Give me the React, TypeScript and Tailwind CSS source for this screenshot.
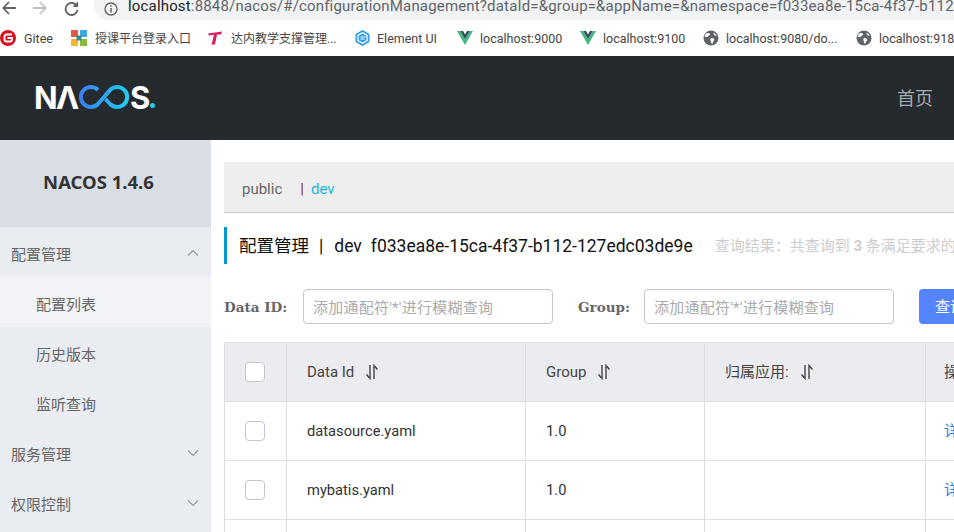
import React from "react";

const SANS = "font-['Roboto','Noto_Sans_CJK_SC',sans-serif]";

function Chevron({ up }: { up?: boolean }) {
  return (
    <svg width="12" height="8" viewBox="0 0 12 8" fill="none" stroke="#8f96a3" strokeWidth="1.1" className="mt-[2px]">
      <path d={up ? "M1 6.5 6 1.5l5 5" : "M1 1.5l5 5 5-5"} />
    </svg>
  );
}

function SortIcon() {
  return (
    <svg width="14" height="16" viewBox="0 0 14 16" fill="none" stroke="#444" strokeWidth="1.4" className="ml-[11px]">
      <path d="M5 1v13.5L1.500 10.500" />
      <path d="M9 15V1.500l3.500 4" />
    </svg>
  );
}

function Vue() {
  return (
    <svg width="16" height="14" viewBox="0 0 16 14">
      <path d="M0 0h3.400L8 8l4.600-8H16L8 14z" fill="#41b883" />
      <path d="M3.400 0h2.600L8 3.400 10 0h2.600L8 8z" fill="#35495e" />
    </svg>
  );
}

function Globe() {
  return (
    <svg width="16" height="16" viewBox="0 0 16 16">
      <circle cx="8" cy="8" r="7.500" fill="#5f6368" />
      <path d="M3 3.500c1.500-.8 3-.8 4 .2.600.8-.3 1.400-1.100 1.700-.9.400-.6 1.400-1.500 1.600C3.300 7.200 2 6.500 1.500 7 1.700 5.500 2.200 4.400 3 3.500zM8 8.200c1.300-.4 3 .2 3.300 1.300.2 1-.9 1.600-1.300 2.500-.3.800-.4 1.600-1 2-.9-.8-.8-2-1.300-3C7.300 10 7 8.700 8 8.200zM10.500 2.700c1.500.6 2.600 1.800 3.200 3.300-.8.200-1.700-.2-2.300-.9-.4-.7-1.300-1.400-.9-2.400z" fill="#fff" />
    </svg>
  );
}

function Bookmark({ w, icon, label, tight, cjk }: { w: string; icon: React.ReactNode; label: string; tight?: boolean; cjk?: boolean }) {
  return (
    <div className={`flex items-center shrink-0 ${tight ? "gap-[7px]" : "gap-[8px]"} ${w}`}>
      <span className="flex w-[16px] justify-center shrink-0 mt-[-1px]">{icon}</span>
      <span className={`whitespace-nowrap pt-[2px] ${cjk ? "text-[12px]" : "text-[12.500px]"}`}>{label}</span>
    </div>
  );
}

function Logo() {
  return (
    <div className="flex items-center h-[24px] -ml-[2px] -mt-[2px] text-white font-['Inter',sans-serif] font-bold text-[31px] leading-none" aria-label="NACOS.">
      <span className="w-[22px]">N</span>
      <span className="w-[24px]">Λ</span>
      <svg width="50" height="24" viewBox="0 0 50 24" fill="none" strokeWidth="4" className="-ml-[1px]">
        <defs>
          <linearGradient id="lg" gradientUnits="userSpaceOnUse" x1="0" x2="50" y1="0" y2="0">
            <stop offset="0" stopColor="#3c7df0" />
            <stop offset="1" stopColor="#1fd0ee" />
          </linearGradient>
        </defs>
        <path d="M19 5A10 10 0 1 0 19 19L31 5A10 10 0 1 1 31 19L26.500 14" stroke="url(#lg)" />
      </svg>
      <span className="w-[20px] ml-[1px]">S</span>
      <span className="w-[5px] h-[5px] rounded-full bg-[#22cfe8] self-end mb-[1px]" />
    </div>
  );
}

function MenuItem({ label, sub, active, up, down }: { label: string; sub?: boolean; active?: boolean; up?: boolean; down?: boolean }) {
  return (
    <div className={`flex items-center justify-between h-[50px] pr-[12px] text-[15px] text-[#666] ${sub ? "pl-[36px]" : "pl-[11px]"} ${active ? "bg-[#f1f3f7]" : ""}`}>
      <span className="pt-[7px]">{label}</span>
      {up && <Chevron up />}
      {down && <Chevron />}
    </div>
  );
}

function Check() {
  return <span className="block w-[20px] h-[20px] rounded-[4px] border border-[#c4c6cf] bg-white ml-[20px]" />;
}

const cell = "border border-[#dcdee3]";

function Row({ name }: { name: string }) {
  return (
    <tr className="h-[59px]">
      <td className="border border-[#dcdee3]"><Check /></td>
      <td className={`${cell} px-[20px] text-[14.700px] text-[#333]`}>{name}</td>
      <td className={`${cell} px-[20px] text-[14.700px] text-[#333]`}>1.0</td>
      <td className={`${cell} px-[20px] text-[14.700px] text-[#333]`}></td>
      <td className={`${cell} px-[18px] text-[15px] text-[#2a7ae2] whitespace-nowrap`}>详情</td>
    </tr>
  );
}

function Head({ label }: { label: string }) {
  return (
    <th className={`${cell} px-[20px] text-[15px] text-left font-normal text-[#444]`}>
      <span className="flex items-center">
        {label}
        <SortIcon />
      </span>
    </th>
  );
}

export default function App() {
  return (
    <div className={`w-[954px] h-[532px] overflow-hidden bg-white flex flex-col ${SANS}`}>
      {/* browser toolbar */}
      <div className="h-[20px] shrink-0 flex items-start overflow-hidden">
        <div className="flex items-center gap-[17px] pl-[2px] w-[94px] shrink-0 h-[16px]">
          <svg width="14" height="14" viewBox="0 0 14 14" fill="none" stroke="#5f6368" strokeWidth="1.8">
            <path d="M14 7H1.500M7 1 1.300 7 7 13" />
          </svg>
          <svg width="14" height="14" viewBox="0 0 14 14" fill="none" stroke="#bdc1c6" strokeWidth="1.8">
            <path d="M0 7h12.500M7 1l5.700 6L7 13" />
          </svg>
          <svg width="15" height="15" viewBox="0 0 15 15" fill="none" stroke="#5f6368" strokeWidth="1.8">
            <path d="M12.800 5A6 6 0 1 0 13.500 9" />
            <path d="M14 .5V6H8.500z" fill="#5f6368" stroke="none" />
          </svg>
        </div>
        <div className="flex-1 h-[20px] bg-[#f1f3f4] rounded-bl-[14px] flex items-end pb-[5px] pl-[10px] min-w-0">
          <svg width="14" height="14" viewBox="0 0 14 14" fill="none" className="shrink-0 mb-[-1px]">
            <circle cx="7" cy="7" r="6" stroke="#5f6368" strokeWidth="1.300" />
            <path d="M7 6v4.500M7 3.300v1.500" stroke="#5f6368" strokeWidth="1.500" />
          </svg>
          <span className="ml-[10px] text-[15px] leading-[18px] text-[#5f6368] whitespace-nowrap tracking-[0.17px]">
            <span className="text-[#202124]">localhost</span>:8848/nacos/#/configurationManagement?dataId=&amp;group=&amp;appName=&amp;namespace=f033ea8e-15ca-4f37-b112
          </span>
        </div>
      </div>

      {/* bookmarks */}
      <div className="h-[36px] shrink-0 flex items-center text-[#444] overflow-hidden">
        <Bookmark
          w="w-[71px]"
          label="Gitee"
          icon={
            <svg width="16" height="16" viewBox="0 0 16 16">
              <circle cx="8" cy="8" r="8" fill="#d6121f" />
              <path d="M12 4.500H6.500A2 2 0 0 0 4.500 6.500v3a2 2 0 0 0 2 2h3.500a2 2 0 0 0 2-2V8H7.500" fill="none" stroke="#fff" strokeWidth="1.800" />
            </svg>
          }
        />
        <Bookmark
          cjk
          w="w-[136px]"
          label="授课平台登录入口"
          icon={
            <svg width="16" height="16" viewBox="0 0 16 16">
              <rect x="0" y="0" width="7" height="7" fill="#e2574c" />
              <rect x="9" y="0" width="7" height="7" fill="#3ea6e0" />
              <rect x="0" y="9" width="7" height="7" fill="#f2b632" />
              <rect x="9" y="9" width="7" height="7" fill="#8cba3f" />
              <rect x="5.500" y="5.500" width="5" height="5" fill="#2d8f8f" />
            </svg>
          }
        />
        <Bookmark
          cjk
          w="w-[147px]"
          label="达内教学支撑管理..."
          icon={
            <svg width="14" height="14" viewBox="0 0 14 14">
              <path d="M0 2.500 14 0.500 13 3.500H9L7 13.500H3.500L6 3.800 1 4.500z" fill="#d81e63" />
            </svg>
          }
        />
        <Bookmark
          tight
          w="w-[103px]"
          label="Element UI"
          icon={
            <svg width="15" height="16" viewBox="0 0 15 16">
              <path d="M7.500 0 14.500 4v8l-7 4-7-4V4z" fill="#2f9cf0" />
              <path d="M7.500 2 12.700 5v6l-5.200 3-5.200-3V5z" fill="#fff" />
              <path d="M7.500 3.500 11.400 5.700v4.600l-3.900 2.200-3.900-2.200V5.700z" fill="#2f9cf0" />
              <path d="M5.500 7h5M5.500 9h4" stroke="#fff" strokeWidth="1" />
            </svg>
          }
        />
        <Bookmark tight w="w-[123px]" label="localhost:9000" icon={<Vue />} />
        <Bookmark tight w="w-[123px]" label="localhost:9100" icon={<Vue />} />
        <Bookmark tight w="w-[153px]" label="localhost:9080/do..." icon={<Globe />} />
        <Bookmark tight w="w-[120px]" label="localhost:9182" icon={<Globe />} />
      </div>

      {/* app header */}
      <div className="h-[84px] shrink-0 bg-[#252a2f] flex items-center justify-between pl-[36px] pr-[21px]">
        <Logo />
        <span className="text-[18px] text-[#a8acb0] mt-[1px]">首页</span>
      </div>

      <div className="flex flex-1 min-h-0">
        {/* sidebar */}
        <aside className="w-[211px] shrink-0 bg-[#e9ecf1]">
          <div className="h-[87px] bg-[#d9dde5] flex items-center justify-center pb-[3px] text-[18.500px] font-bold text-[#333] font-['Noto_Sans','Noto_Sans_CJK_SC',sans-serif] pr-[14px]">
            NACOS 1.4.6
          </div>
          <MenuItem label="配置管理" up />
          <MenuItem label="配置列表" sub active />
          <MenuItem label="历史版本" sub />
          <MenuItem label="监听查询" sub />
          <MenuItem label="服务管理" down />
          <MenuItem label="权限控制" down />
        </aside>

        {/* main */}
        <main className="flex-1 min-w-0 overflow-hidden pl-[13px] pt-[22px]">
          <div className="w-[900px] h-[51px] bg-[#eee] border-b border-[#ccc] flex items-center pl-[18px] pt-[5px] text-[15px]">
            <span className="text-[#666]">public</span>
            <span className="ml-[18px] text-[#7a2a1a]">|</span>
            <span className="ml-[7px] text-[#16b8e0]">dev</span>
          </div>

          <div className="mt-[14px] h-[37px] border-l-[3px] border-[#09c] pl-[12px] pt-[2px] flex items-center whitespace-nowrap w-[900px] text-[17.500px] text-[#111]">
            <span>配置管理</span>
            <span className="ml-[10px]">|</span>
            <span className="ml-[11px]">dev</span>
            <span className="ml-[9px]">f033ea8e-15ca-4f37-b112-127edc03de9e</span>
            <span className="text-[15px] text-[#ccc] ml-[22px]">
              查询结果：共查询到 <b>3</b> 条满足要求的配置。
            </span>
          </div>

          <div className="mt-[25px] flex items-center w-[900px] h-[35px]">
            <label className="w-[79px] shrink-0 pt-[2px] text-[13.500px] font-bold text-[#666] font-['DejaVu_Serif',serif]">Data ID:</label>
            <div className="w-[250px] h-[35px] shrink-0 border border-[#c4c6cf] rounded-[4px] flex items-center pl-[9px] pt-[3px] text-[15px] tracking-[0.25px] text-[#aaa]">添加通配符'*'进行模糊查询</div>
            <label className="ml-[25px] w-[66px] shrink-0 pt-[2px] text-[13.500px] font-bold text-[#666] font-['DejaVu_Serif',serif]">Group:</label>
            <div className="w-[250px] h-[35px] shrink-0 border border-[#c4c6cf] rounded-[4px] flex items-center pl-[9px] pt-[3px] text-[15px] tracking-[0.25px] text-[#aaa]">添加通配符'*'进行模糊查询</div>
            <button className="ml-[25px] w-[64px] h-[35px] shrink-0 rounded-[4px] bg-[#5584ff] text-white text-[15px] text-left pl-[16px] pt-[2px]">查询</button>
          </div>

          <table className="mt-[18px] table-fixed border-collapse w-[900px]">
            <colgroup>
              <col className="w-[62px]" />
              <col className="w-[239px]" />
              <col className="w-[179px]" />
              <col className="w-[221px]" />
              <col />
            </colgroup>
            <thead>
              <tr className="h-[59px] bg-[#ebecf0]">
                <th className="border border-[#dcdee3]"><Check /></th>
                <Head label="Data Id" />
                <Head label="Group" />
                <Head label="归属应用:" />
                <th className={`${cell} px-[18px] text-[15px] text-left font-normal text-[#444] whitespace-nowrap`}>操作</th>
              </tr>
            </thead>
            <tbody>
              <Row name="datasource.yaml" />
              <Row name="mybatis.yaml" />
              <Row name="redis.yaml" />
            </tbody>
          </table>
        </main>
      </div>
    </div>
  );
}
